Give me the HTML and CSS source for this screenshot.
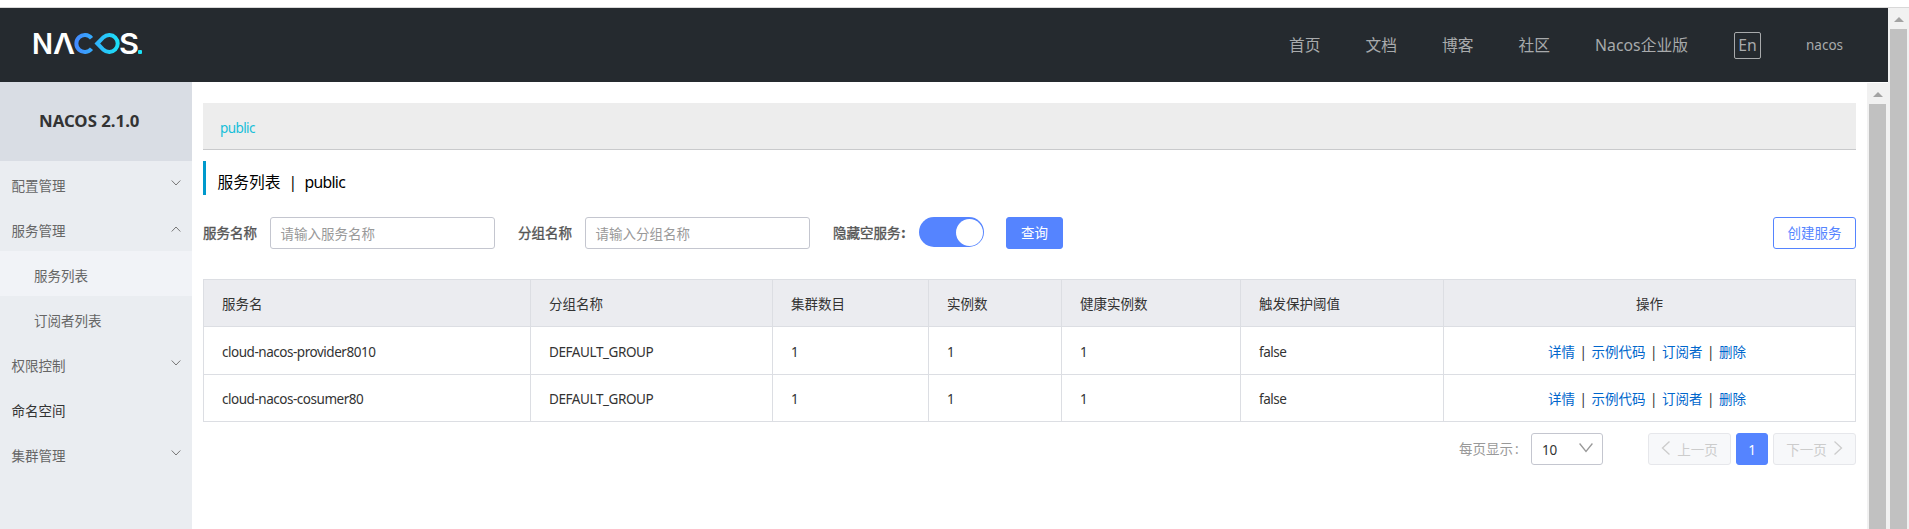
FILE: index.html
```html
<!DOCTYPE html>
<html lang="zh-CN">
<head>
<meta charset="utf-8">
<title>Nacos</title>
<link rel="stylesheet" href="styles.css">
</head>
<body>
<div class="page">
  <div class="frame">
    <header class="header">
      <svg class="logo" width="110" height="24" viewBox="0 0 110 24">
        <defs><linearGradient id="g" gradientUnits="userSpaceOnUse" x1="41" y1="0" x2="85" y2="0"><stop offset="0" stop-color="#4488ff"/><stop offset="1" stop-color="#1be1f6"/></linearGradient></defs>
        <text class="logo-text" x="-2" y="23" textLength="21" lengthAdjust="spacingAndGlyphs">N</text>
        <text class="logo-text" x="19" y="23" textLength="22" lengthAdjust="spacingAndGlyphs">Λ</text>
        <path class="loop" d="M57.500 7.200A8.500 8.500 0 1 0 57.500 17.800M69.500 18.800L63.300 12.500L69.500 6.200A8.500 8.500 0 1 1 69.500 18.800Z" stroke="url(#g)"/>
        <text class="logo-text" x="85" y="23" textLength="20" lengthAdjust="spacingAndGlyphs">S</text>
        <rect x="104" y="19" width="4" height="4" rx="1" fill="#1be1f6"/>
      </svg>
      <nav class="nav">
        <a>首页</a><a>文档</a><a>博客</a><a>社区</a><a class="ent">Nacos企业版</a><a class="lang">En</a><a class="user">nacos</a>
      </nav>
    </header>
    <div class="body">
      <aside class="side">
        <h1 class="version">NACOS 2.1.0</h1>
        <div class="item">配置管理<svg class="chev" viewBox="0 0 10 6"><path d="M.7.5L5 5 9.300.5"/></svg></div>
        <div class="item">服务管理<svg class="chev up" viewBox="0 0 10 6"><path d="M.7 5.500L5 1 9.300 5.500"/></svg></div>
        <div class="item sub active">服务列表</div>
        <div class="item sub">订阅者列表</div>
        <div class="item">权限控制<svg class="chev" viewBox="0 0 10 6"><path d="M.7.5L5 5 9.300.5"/></svg></div>
        <div class="item dark">命名空间</div>
        <div class="item">集群管理<svg class="chev" viewBox="0 0 10 6"><path d="M.7.5L5 5 9.300.5"/></svg></div>
      </aside>
      <main class="main">
        <div class="ns"><span>public</span></div>
        <h2 class="title"><span class="t-name">服务列表</span><span class="t-sep">|</span><span class="t-ns">public</span></h2>
        <div class="form">
          <label class="label l1">服务名称</label><div class="input">请输入服务名称</div>
          <label class="label l2">分组名称</label><div class="input">请输入分组名称</div>
          <label class="label l3">隐藏空服务<b>:</b></label><div class="switch"><i></i></div>
          <button class="btn primary">查询</button>
          <button class="btn create">创建服务</button>
        </div>
        <table class="table">
          <colgroup><col class="c1"><col class="c2"><col class="c3"><col class="c4"><col class="c5"><col class="c6"><col class="c7"></colgroup>
          <tr class="head"><th>服务名</th><th>分组名称</th><th>集群数目</th><th>实例数</th><th>健康实例数</th><th>触发保护阈值</th><th class="ops">操作</th></tr>
          <tr class="r1"><td><span class="name">cloud-nacos-provider8010</span></td><td><span class="grp">DEFAULT_GROUP</span></td><td>1</td><td>1</td><td>1</td><td><span class="name">false</span></td><td class="ops"><div class="links"><a>详情</a><i>|</i><a>示例代码</a><i>|</i><a>订阅者</a><i>|</i><a>删除</a></div></td></tr>
          <tr class="r2"><td><span class="name">cloud-nacos-cosumer80</span></td><td><span class="grp">DEFAULT_GROUP</span></td><td>1</td><td>1</td><td>1</td><td><span class="name">false</span></td><td class="ops"><div class="links"><a>详情</a><i>|</i><a>示例代码</a><i>|</i><a>订阅者</a><i>|</i><a>删除</a></div></td></tr>
        </table>
        <div class="pager">
          <span class="per">每页显示<b>:</b></span>
          <div class="select">10<svg width="14" height="10" viewBox="0 0 14 10"><path d="M1 1L7 8.500 13 1"/></svg></div>
          <div class="pg prev"><svg width="9" height="14" viewBox="0 0 9 14"><path d="M8 1L1.500 7 8 13"/></svg>上一页</div>
          <div class="pg cur">1</div>
          <div class="pg next">下一页<svg width="9" height="14" viewBox="0 0 9 14"><path d="M1 1L7.500 7 1 13"/></svg></div>
        </div>
      </main>
      <div class="scroll inner"><svg width="10" height="5" viewBox="0 0 10 5"><path d="M5 0L10 5H0Z"/></svg><div class="thumb"></div></div>
    </div>
  </div>
  <div class="scroll"><svg width="10" height="5" viewBox="0 0 10 5"><path d="M5 0L10 5H0Z"/></svg><div class="thumb"></div></div>
</div>
</body>
</html>
```
FILE: styles.css
```css
* { box-sizing: border-box; }
body { margin: 0; background: #fff; color: #333; font: 13.5px/20px "Noto Sans", "Noto Sans CJK SC", sans-serif; overflow: hidden; }
.page { height: 529px; padding-top: 7px; display: flex; }
.frame, .page > .scroll { border-top: 1px solid #d8d8d8; }
.frame { width: 1888px; display: flex; flex-direction: column; }
.header { height: 74px; background: #252a2f; display: flex; justify-content: space-between; padding: 0 45px 0 34px; }
.logo { margin-top: 23px; overflow: visible; }
.logo-text { font: 600 29px Inter, sans-serif; fill: #fff; }
.loop { fill: none; stroke-width: 4; }
.nav { display: flex; align-items: center; color: #a8aaac; font-size: 15.75px; gap: 45px; }
.ent { width: 94px; white-space: nowrap; letter-spacing: .05px; }
.lang { width: 27px; height: 27px; border: 1px solid #a8aaac; border-radius: 2px; line-height: 24px; text-align: center; }
.user { font-size: 13.5px; width: 37px; }
.body { flex: 1; display: flex; min-height: 0; }
.side { width: 192px; background: #eaedf1; color: #666; }
.version { margin: 0; height: 79px; background: #d9dde4; color: #333; font-size: 16.8px; font-weight: 700; line-height: 78px; padding-left: 39px; white-space: nowrap; }
.item { height: 45px; padding: 4px 11px 0 11.500px; display: flex; align-items: center; justify-content: space-between; }
.sub { padding-left: 34px; }
.active { background: #f1f3f7; }
.dark { color: #333; }
.chev { width: 10px; height: 6px; margin-bottom: 5px; }
.up { margin-bottom: 3px; }
.chev path { fill: none; stroke: #777; stroke-width: 1; }
.main { width: 1675px; padding: 21px 11px 0; }
.ns { height: 47px; background: #ededed; border-bottom: 1px solid #c9cacc; padding-left: 17px; line-height: 50px; color: #17bfd9; letter-spacing: -.6px; }
.title { margin: 11px 0 0; height: 34px; border-left: 3px solid #09c; padding: 9px 0 0 11.500px; color: #000; font-size: 15.75px; font-weight: 400; line-height: 24px; display: flex; }
.t-name { width: 71px; }
.t-sep { width: 16px; }
.t-ns { letter-spacing: -.7px; }
.form { margin-top: 22px; height: 62px; display: flex; align-items: flex-start; }
.label { color: #555; line-height: 33px; white-space: nowrap; -webkit-text-stroke: .35px #555; }
.label b { margin-left: 1px; }
.l1 { width: 67px; }
.l2 { width: 67px; margin-left: 23px; }
.l3 { width: 86px; margin-left: 23px; }
.input { width: 225px; height: 32px; border: 1px solid #c4c6cf; border-radius: 3px; padding: 0 9.500px; line-height: 32px; color: #999; }
.switch { width: 65px; height: 30px; border-radius: 15px; background: #5584ff; padding: 1.500px 1px; display: flex; justify-content: flex-end; }
.switch i { width: 27px; height: 27px; border-radius: 50%; background: #fff; }
.btn { height: 32px; border-radius: 3px; padding: 1px 0 0; font: inherit; line-height: 29px; border: 1px solid #5584ff; }
.primary { width: 57px; margin-left: 22px; background: #5584ff; color: #fff; }
.create { width: 83px; margin-left: auto; background: #fff; color: #5584ff; }
.table { width: 1653px; table-layout: fixed; border-collapse: separate; border-spacing: 0; border: solid #dcdee3; border-width: 1px 0 0 1px; }
.c1 { width: 327px; } .c2 { width: 242px; } .c3 { width: 156px; } .c4 { width: 133px; } .c5 { width: 179px; } .c6 { width: 203px; } .c7 { width: 412px; }
th, td { padding: 1px 0 0 18px; border: solid #dcdee3; border-width: 0 1px 1px 0; font-weight: 400; text-align: left; white-space: nowrap; }
.r1 td { padding-top: 3px; }
.head { height: 47px; background: #ebecf0; }
.r1 { height: 48px; } .r2 { height: 47px; }
.r2 td { padding-top: 2px; }
.name { letter-spacing: -.47px; }
.grp { letter-spacing: -.42px; }
th.ops { padding-left: 0; text-align: center; }
td.ops { padding-left: 0; padding-right: 5px; }
.links { display: flex; justify-content: center; color: #06c; }
.links i { width: 16.500px; font-style: normal; color: #333; text-align: center; }
.pager { margin-top: 11px; display: flex; justify-content: flex-end; line-height: 32px; }
.per { color: #999; width: 72px; }
.per b { font-weight: 400; margin-left: 2px; }
.select { width: 72px; height: 32px; border: 1px solid #c4c6cf; border-radius: 3px; padding: 1px 9px 0 10px; display: flex; align-items: center; justify-content: space-between; margin-right: 45px; letter-spacing: -.3px; }
.select svg { margin-top: -3px; }
.select path, .pg path { fill: none; stroke: #999; stroke-width: 1.300; stroke-linecap: square; }
.pg { width: 83px; height: 32px; border: 1px solid #e6e7eb; border-radius: 3px; background: #f7f8fa; color: #ccc; padding-top: 1px; display: flex; align-items: center; justify-content: center; gap: 7px; }
.pg path { stroke: #ccc; }
.pg svg { margin-top: -3px; }
.cur { width: 32px; margin: 0 5px; background: #5584ff; border-color: #5584ff; color: #fff; }
.scroll { width: 21px; background: #f1f1f1; display: flex; flex-direction: column; align-items: center; padding-top: 9px; }
.inner { margin-top: 1px; }
.scroll path { fill: #a3a3a3; }
.thumb { width: 17px; flex: 1; background: #c1c1c1; margin-top: 7px; }
```
